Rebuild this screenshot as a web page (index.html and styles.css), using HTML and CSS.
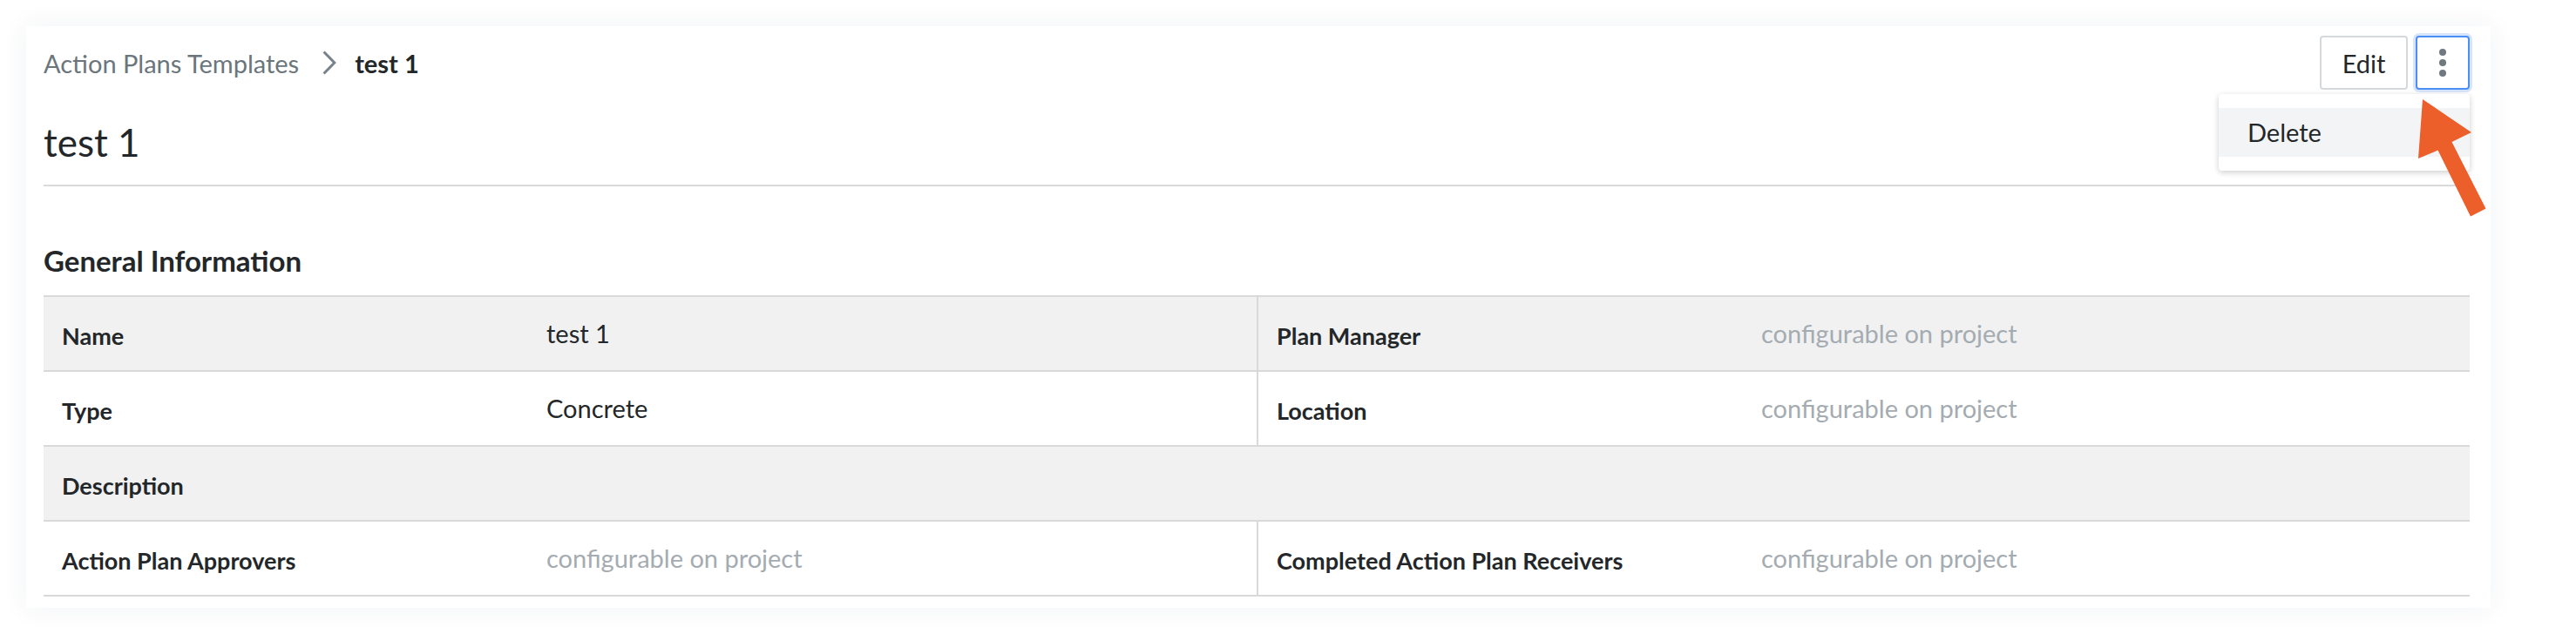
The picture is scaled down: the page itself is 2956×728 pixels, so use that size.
FILE: index.html
```html
<!DOCTYPE html>
<html lang="en">
<head>
<meta charset="utf-8">
<title>test 1 - Action Plans Templates</title>
<link rel="stylesheet" href="styles.css">
</head>
<body>
<main class="card">
  <header class="page-header">
    <nav class="breadcrumb">
      <span class="crumb-link">Action Plans Templates</span>
      <svg class="crumb-sep" width="16" height="28" viewBox="0 0 16 28"><path d="M1.6 1.5 L13.8 14 L1.6 26.5" fill="none" stroke="#76838a" stroke-width="3"/></svg>
      <span class="crumb-current">test 1</span>
    </nav>
    <div class="actions">
      <button class="btn btn-edit">Edit</button>
      <button class="btn btn-more" aria-label="More">
        <svg width="10" height="34" viewBox="0 0 10 34"><circle cx="5" cy="5" r="4" fill="#6e7a80"/><circle cx="5" cy="17" r="4" fill="#6e7a80"/><circle cx="5" cy="29" r="4" fill="#6e7a80"/></svg>
      </button>
      <div class="menu">
        <div class="menu-item">Delete</div>
      </div>
    </div>
  </header>

  <h1 class="title">test 1</h1>
  <hr class="divider">

  <h2 class="section-title">General Information</h2>
  <div class="info-grid">
    <div class="cell shaded">
      <div class="label">Name</div>
      <div class="value">test 1</div>
    </div>
    <div class="cell shaded right">
      <div class="label">Plan Manager</div>
      <div class="value muted">configurable on project</div>
    </div>
    <div class="cell">
      <div class="label">Type</div>
      <div class="value">Concrete</div>
    </div>
    <div class="cell right">
      <div class="label">Location</div>
      <div class="value muted">configurable on project</div>
    </div>
    <div class="cell shaded full">
      <div class="label">Description</div>
      <div class="value"></div>
    </div>
    <div class="cell">
      <div class="label">Action Plan Approvers</div>
      <div class="value muted">configurable on project</div>
    </div>
    <div class="cell right">
      <div class="label">Completed Action Plan Receivers</div>
      <div class="value muted">configurable on project</div>
    </div>
  </div>
</main>

<svg class="annotation-arrow" width="90" height="145" viewBox="2770 110 90 145">
  <polygon points="2780,114 2836,152 2813.5,163 2852.5,239.5 2835,248.5 2797.5,172.5 2775,182" fill="#ec5f2a"/>
</svg>
</body>
</html>
```

FILE: styles.css
```css
* {
  box-sizing: border-box;
}

html, body {
  margin: 0;
  padding: 0;
  background: #ffffff;
}

body {
  position: relative;
  font-family: "Lato", "Open Sans", sans-serif;
  color: #232729;
  font-size: 29px;
  width: 2956px;
  height: 728px;
  overflow: hidden;
}

.card {
  margin: 30px 98px 0 30px;
  height: 668px;
  background: #ffffff;
  padding: 11px 24px 0 20px;
  box-shadow: 0 0 28px 2px rgba(20, 50, 100, 0.055);
}

.page-header {
  display: flex;
  justify-content: space-between;
  align-items: center;
  height: 62px;
}

.breadcrumb {
  display: flex;
  align-items: center;
  line-height: 1;
}

.crumb-link {
  color: #6a767c;
}

.crumb-sep {
  margin: 0 21px 0 27px;
}

.crumb-current {
  font-weight: 700;
}

.actions {
  position: relative;
  display: flex;
  gap: 9px;
}

.btn {
  font-family: inherit;
  font-size: 29px;
  color: #232729;
  background: #ffffff;
  height: 62px;
  border-radius: 4px;
  padding: 0;
  display: flex;
  align-items: center;
  justify-content: center;
}

.btn-edit {
  width: 101px;
  border: 2px solid #d5d9dc;
}

.btn-more {
  width: 62px;
  border: 2px solid #4b8ff5;
  box-shadow: 0 0 0 3px #d6e5fc;
}

.menu {
  position: absolute;
  top: 67px;
  right: 0;
  width: 288px;
  padding: 16px 0;
  background: #ffffff;
  border-radius: 4px;
  box-shadow: 0 2px 7px rgba(0, 0, 0, 0.2);
}

.menu-item {
  height: 56px;
  line-height: 56px;
  padding-left: 33px;
  background: #f3f4f5;
  color: #232729;
}

.title {
  margin: 34px 0 0 0;
  font-size: 44px;
  font-weight: 400;
  line-height: 1.2;
}

.divider {
  margin: 22px 0 0 0;
  border: 0;
  height: 2px;
  background: #dadada;
}

.section-title {
  margin: 66px 0 0 0;
  font-size: 33px;
  font-weight: 700;
  line-height: 1.2;
}

.info-grid {
  margin-top: 20px;
  display: grid;
  grid-template-columns: 1fr 1fr;
  border-top: 2px solid #d9d9d9;
}

.cell {
  display: grid;
  grid-template-columns: 577px 1fr;
  align-items: center;
  height: 86px;
  border-bottom: 2px solid #d9d9d9;
}

.cell.shaded {
  background: #f1f1f1;
}

.cell.right {
  border-left: 2px solid #d9d9d9;
}

.cell.full {
  grid-column: 1 / -1;
}

.label {
  padding-left: 21px;
  padding-top: 5px;
  font-weight: 700;
  font-size: 27px;
}

.value {
  padding-bottom: 2px;
}

.value.muted {
  color: #a4acb1;
}

.annotation-arrow {
  position: absolute;
  left: 2770px;
  top: 110px;
}
```
